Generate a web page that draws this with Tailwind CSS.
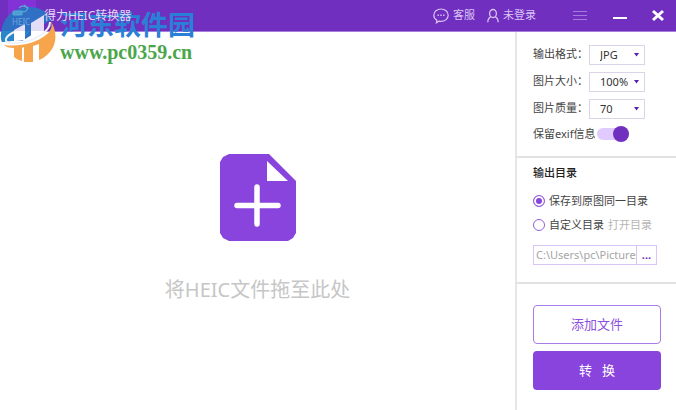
<!DOCTYPE html>
<html lang="zh-CN">
<head>
    <meta charset="UTF-8">
    <meta name="viewport" content="width=device-width, initial-scale=1.0">
    <title>得力HEIC转换器</title>
    <script src="https://cdn.jsdelivr.net/npm/@tailwindcss/browser@4"></script>
</head>
<body class="min-h-screen flex flex-col bg-white text-[11px] text-[#444] font-['Noto_Sans','Noto_Sans_CJK_SC',sans-serif]">

<!-- Title bar -->
<header class="relative flex items-center h-8 pl-2 pr-3 bg-[#712fc0] border-b border-[#a67fdc] text-[#d9c4f3]">
    <div class="w-7 h-8 rounded-b-md bg-[#8232d6]"></div>
    <h1 class="relative z-10 ml-2 text-xs text-[#e3d5f5]">得力HEIC转换器</h1>

    <nav class="ml-auto flex items-center">
        <button type="button" class="flex items-center gap-1">
            <svg class="w-4 h-4" viewBox="0 0 16 16" fill="none" stroke="currentColor" stroke-width="1.2">
                <path d="M3.4 14.8l.5-2.6C1.9 11 .8 9.2 .8 7.2.8 3.7 4 1 8 1s7.2 2.7 7.2 6.2S12 13.4 8 13.4c-.7 0-1.4-.1-2-.2z"/>
                <path d="M4.5 7.2h1.4M7.3 7.2h1.4M10.1 7.2h1.4" stroke-width="1.6"/>
            </svg>
            <span>客服</span>
        </button>
        <button type="button" class="ml-3 flex items-center gap-1">
            <svg class="w-3 h-4" viewBox="0 0 12 16" fill="none" stroke="currentColor" stroke-width="1.3">
                <ellipse cx="6" cy="5.5" rx="3.4" ry="4"/>
                <path d="M4 8.6C1.8 9.6.8 11.5.8 14.3M8 8.6c2.2 1 3.2 2.9 3.2 5.7"/>
            </svg>
            <span>未登录</span>
        </button>
        <button type="button" aria-label="菜单" class="ml-9">
            <svg class="w-4 h-4" viewBox="0 0 16 16" stroke="#a67bdd"><path d="M1 3.5h14M1 7.5h14M1 11.5h14"/></svg>
        </button>
        <button type="button" aria-label="最小化" class="ml-6">
            <svg class="w-4 h-4" viewBox="0 0 16 16" stroke="#fff" stroke-width="2"><path d="M1 10h14"/></svg>
        </button>
        <button type="button" aria-label="关闭" class="ml-6">
            <svg class="w-3 h-4" viewBox="0 0 12 16" stroke="#fff" stroke-width="3"><path d="M1 3l10 9M11 3l-10 9"/></svg>
        </button>
    </nav>

    <!-- Site watermark, laid over the title bar -->
    <div class="absolute left-0 top-0 flex items-start pointer-events-none">
        <svg class="w-14 h-16" viewBox="0 0 56 64">
            <!-- blue upper half of the disc -->
            <path d="M2 42C-2 22 11 7 29 7c11 0 19 5 23 13L44 24 30 36l-8 5H12z" fill="#2f6fc4"/>
            <path d="M2 42C0 37 1 33 2 31h28l-8 10H8z" fill="#2a86c8"/>
            <!-- two light columns -->
            <path d="M14 30l11-6v16l-11 1zM31 23l13-8v20l-13 5z" fill="#e2dcf6"/>
            <path d="M14 31h11v9l-11 1zM31 31h13v5l-13 4z" fill="#fff"/>
            <!-- swoosh between the halves -->
            <path d="M14 32c-8 4-11 9-5 11 12 1 24-2 33-9 6-4 8-8 8-12" fill="none" stroke="#eef2fb" stroke-width="2"/>
            <!-- orange lower half -->
            <path d="M4 45c16 2 32-2 42-10 6-5 7-10 4-15 8 11 7 26-2 34-3 3-6 5-9 6V44l-6 2v16h-9V47l-2 1v13c-3-1-6-2-8-4v-9C9 48 6 47 4 45z" fill="#f6a54d"/>
            <g fill="none" stroke="#58a8d2" stroke-width="1.2">
                <rect x="13" y="11" width="9" height="4" rx="1" fill="#4d9ed4"/>
                <path d="M19 8c2-3 7-2 8 0M24 5l4 3-2 3c-2 1-3 1-5 0"/>
            </g>
            <text x="12" y="25" font-size="8" fill="#6fa8dc" font-family="Noto Sans">HEIC</text>
        </svg>
        <div class="ml-1 pt-1.5 whitespace-nowrap font-bold">
            <p class="text-[27px] leading-9 text-[#2a80d6] font-['Noto_Sans_CJK_SC',sans-serif]">河东软件园</p>
            <p class="text-xl leading-5 text-[#4ba64b] font-['Liberation_Serif',serif]">www.pc0359.cn</p>
        </div>
    </div>
</header>

<div class="flex-1 flex">
    <!-- Drop area -->
    <main class="flex-1 flex flex-col items-center pt-[122px]">
        <svg class="w-19 h-22" viewBox="0 0 76 88">
            <path d="M9 0h40l27 27v52l-3 5-5 3H9l-6-3-3-5V8l3-5z" fill="#8844dd"/>
            <path d="M47 7v20h21z" fill="#fff"/>
            <path d="M37 33v37M17 51.5h41" stroke="#fff" stroke-width="5.5" stroke-linecap="round"/>
        </svg>
        <p class="mt-8 pt-0.5 text-xl text-[#c6c6c6]">将HEIC文件拖至此处</p>
    </main>

    <!-- Settings -->
    <aside class="w-[161px] border-l-2 border-[#e6e6e6]">
        <section class="h-[126px] px-4 pt-[13px] border-b-2 border-[#e2e2e2]">
            <div class="flex flex-col gap-2">
                <div class="flex items-center h-[19px]">
                    <label for="format" class="w-14 whitespace-nowrap">输出格式：</label>
                    <div class="relative">
                        <select id="format" class="appearance-none w-14 h-5 pl-2.5 border border-[#d9d4e8] leading-4 text-[#333]"><option>JPG</option></select>
                        <svg class="absolute right-1 top-2 w-2 h-1" viewBox="0 0 8 4" fill="#5a1fb0"><path d="M1 0h5L3.5 3.5z"/></svg>
                    </div>
                </div>
                <div class="flex items-center h-[19px]">
                    <label for="size" class="w-14 whitespace-nowrap">图片大小：</label>
                    <div class="relative">
                        <select id="size" class="appearance-none w-14 h-5 pl-2.5 border border-[#d9d4e8] leading-4 text-[#333]"><option>100%</option></select>
                        <svg class="absolute right-1 top-2 w-2 h-1" viewBox="0 0 8 4" fill="#5a1fb0"><path d="M1 0h5L3.5 3.5z"/></svg>
                    </div>
                </div>
                <div class="flex items-center h-[19px]">
                    <label for="quality" class="w-14 whitespace-nowrap">图片质量：</label>
                    <div class="relative">
                        <select id="quality" class="appearance-none w-14 h-5 pl-2.5 border border-[#d9d4e8] leading-4 text-[#333]"><option>70</option></select>
                        <svg class="absolute right-1 top-2 w-2 h-1" viewBox="0 0 8 4" fill="#5a1fb0"><path d="M1 0h5L3.5 3.5z"/></svg>
                    </div>
                </div>
            </div>
            <div class="mt-2 flex items-center gap-0.5 h-4">
                <label for="exif" class="whitespace-nowrap">保留exif信息</label>
                <input id="exif" type="checkbox" checked class="appearance-none flex items-center w-8 h-3 rounded-full bg-[#e0caff] before:size-4 before:ml-4 before:rounded-full before:bg-[#712fc0]">
            </div>
        </section>

        <section class="h-[126px] px-4 pt-[7px] border-b-2 border-[#e2e2e2]">
            <h2 class="leading-4 font-medium text-[#222]">输出目录</h2>
            <div class="mt-3 flex items-center h-4">
                <input id="same" type="radio" name="dir" checked class="appearance-none shrink-0 size-3 border border-[#9560da] rounded-full bg-[#8844dd] shadow-[inset_0_0_0_2px_white]">
                <label for="same" class="ml-1 whitespace-nowrap">保存到原图同一目录</label>
            </div>
            <div class="mt-2 flex items-center h-4">
                <input id="custom" type="radio" name="dir" class="appearance-none shrink-0 size-3 border border-[#9560da] rounded-full">
                <label for="custom" class="ml-1 whitespace-nowrap">自定义目录</label>
                <a href="#" class="ml-1 text-[#b5b5b5] whitespace-nowrap">打开目录</a>
            </div>
            <div class="mt-3 flex h-5 w-[124px] border border-[#d9c4f8]">
                <input type="text" aria-label="输出路径" value="C:\Users\pc\Pictures" class="flex-1 min-w-0 pl-0.5 text-[#a5a5a5]">
                <button type="button" class="w-5 border-l border-[#d9c4f8] leading-3 font-bold text-[#712fc0]">...</button>
            </div>
        </section>

        <section class="flex flex-col gap-[7px] pl-4 pr-[15px] pt-[21px]">
            <button type="button" class="h-[39px] border border-[#a87be6] rounded-sm text-[13px] text-[#8e50dd]">添加文件</button>
            <button type="button" class="h-[39px] rounded-sm bg-[#8844dd] text-[13px] text-white">转&nbsp; &nbsp;换</button>
        </section>
    </aside>
</div>

</body>
</html>
